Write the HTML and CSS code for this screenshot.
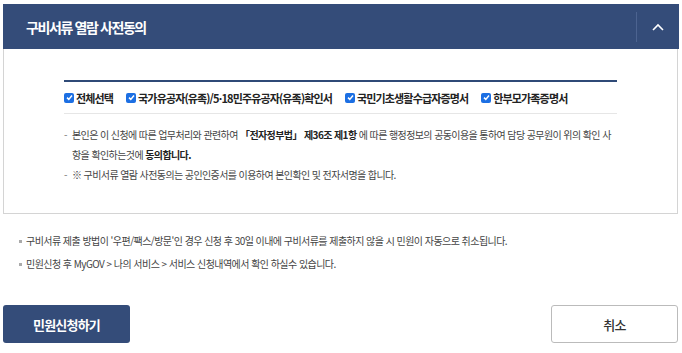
FILE: index.html
```html
<!DOCTYPE html>
<html lang="ko">
<head>
<meta charset="utf-8">
<link rel="stylesheet" href="styles.css">
</head>
<body>
<div class="page">
  <div class="acc-head">
    <h2 class="acc-title">구비서류 열람 사전동의</h2>
    <div class="acc-toggle">
      <svg width="12" height="8" viewBox="0 0 12 8"><path d="M1 7 L6 2 L11 7" fill="none" stroke="#fff" stroke-width="1.6"/></svg>
    </div>
  </div>
  <div class="acc-body">
    <div class="checks">
      <label class="chk"><span class="box"><svg width="9" height="9" viewBox="0 0 9 9"><path d="M2 4.6 L3.8 6.4 L7 2.6" fill="none" stroke="#fff" stroke-width="1.5"/></svg></span>전체선택</label>
      <label class="chk"><span class="box"><svg width="9" height="9" viewBox="0 0 9 9"><path d="M2 4.6 L3.8 6.4 L7 2.6" fill="none" stroke="#fff" stroke-width="1.5"/></svg></span>국가유공자(유족)/5·18민주유공자(유족)확인서</label>
      <label class="chk"><span class="box"><svg width="9" height="9" viewBox="0 0 9 9"><path d="M2 4.6 L3.8 6.4 L7 2.6" fill="none" stroke="#fff" stroke-width="1.5"/></svg></span>국민기초생활수급자증명서</label>
      <label class="chk"><span class="box"><svg width="9" height="9" viewBox="0 0 9 9"><path d="M2 4.6 L3.8 6.4 L7 2.6" fill="none" stroke="#fff" stroke-width="1.5"/></svg></span>한부모가족증명서</label>
    </div>
    <ul class="dash-list">
      <li>본인은 이 신청에 따른 업무처리와 관련하여 <b>「전자정부법」 제36조 제1항</b> 에 따른 행정정보의 공동이용을 통하여 담당 공무원이 위의 확인 사항을 확인하는것에 <b>동의합니다.</b></li>
      <li>※ 구비서류 열람 사전동의는 공인인증서를 이용하여 본인확인 및 전자서명을 합니다.</li>
    </ul>
  </div>
  <ul class="notes">
    <li>구비서류 제출 방법이 '우편/팩스/방문'인 경우 신청 후 30일 이내에 구비서류를 제출하지 않을 시 민원이 자동으로 취소됩니다.</li>
    <li>민원신청 후 MyGOV &gt; 나의 서비스 &gt; 서비스 신청내역에서 확인 하실수 있습니다.</li>
  </ul>
  <div class="btns">
    <button class="btn btn-primary">민원신청하기</button>
    <button class="btn btn-line">취소</button>
  </div>
</div>
</body>
</html>
```
FILE: styles.css
```css
* { box-sizing: border-box; }
html, body { margin: 0; padding: 0; background: #fff; }
body { font-family: "Noto Sans CJK KR", "Noto Sans", sans-serif; color: #333; }
.page { width: 682px; padding: 4px 3px 0 3px; }
.acc-head {
  height: 45px; background: #344c79; display: flex; align-items: center;
  justify-content: space-between;
}
.acc-title {
  margin: 0; padding-left: 23px; color: #fff; font-size: 14px; font-weight: 700;
  letter-spacing: -1.4px;
}
.acc-toggle {
  width: 43px; height: 30px; border-left: 1px solid #4c6390;
  display: flex; align-items: center; justify-content: center;
}
.acc-body {
  border: 1px solid #d4d4d4; border-top: 0; margin-right: 1px;
  height: 165px; padding: 31px 60px 0 60px;
}
.checks {
  border-top: 2px solid #2f4a77; border-bottom: 1px solid #e6e6e6;
  height: 34px; display: flex; align-items: center;
}
.chk {
  display: flex; align-items: center; font-size: 11px; font-weight: 700; color: #222;
  letter-spacing: -0.85px; margin-right: 13px;
}
.box {
  width: 10px; height: 10px; background: #1c6fe3; border-radius: 2px;
  display: inline-flex; align-items: center; justify-content: center; margin-right: 2px;
}
.box svg { display: block; }
.dash-list {
  list-style: none; margin: 11px 0 0 0; padding: 0;
  font-size: 10px; letter-spacing: -0.6px; line-height: 20px; color: #444;
}
.dash-list li { position: relative; padding-left: 8px; padding-right: 6px; }
.dash-list li::before { content: "-"; position: absolute; left: 0; top: 0; color: #777; }
.dash-list b { color: #222; font-weight: 700; }
.notes {
  list-style: none; margin: 19px 0 0 0; padding: 0 0 0 23px;
  font-size: 10px; letter-spacing: -0.55px; line-height: 16px; color: #444;
}
.notes li { position: relative; margin-bottom: 7px; }
.notes li::before {
  content: ""; position: absolute; left: -7px; top: 7px; width: 3px; height: 3px; background: #aaa;
}
.btns { display: flex; justify-content: space-between; margin-top: 33px; padding-right: 1px; }
.btn {
  width: 127px; height: 38px; border-radius: 3px; font-family: inherit;
  font-size: 13px; letter-spacing: -0.8px; cursor: pointer;
}
.btn-primary { background: #344c79; color: #fff; border: 0; font-weight: 700; }
.btn-line { background: #fff; color: #333; border: 1px solid #bbb; font-weight: 500; }
```
